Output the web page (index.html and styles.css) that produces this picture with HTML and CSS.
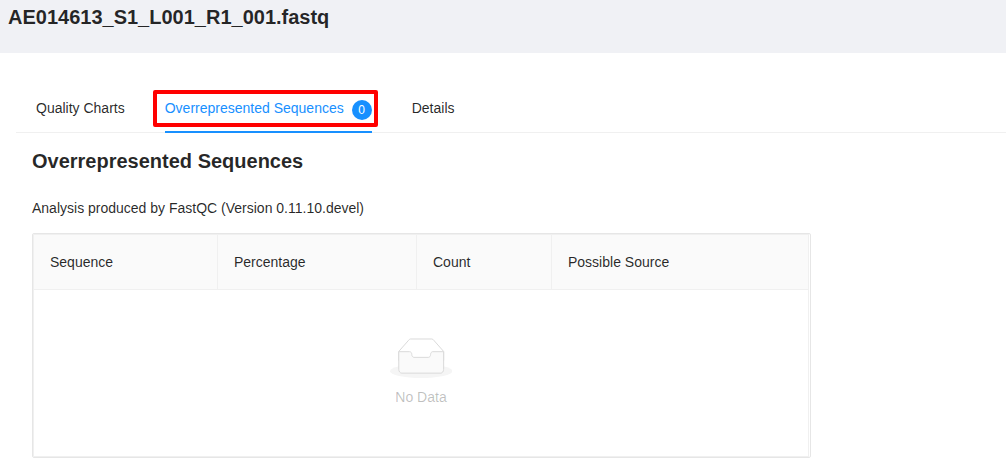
FILE: index.html
```html
<!DOCTYPE html>
<html lang="en">
<head>
<meta charset="utf-8">
<title>FastQC</title>
<link rel="stylesheet" href="styles.css">
</head>
<body>
<header class="page-header"><h1 class="file-name">AE014613_S1_L001_R1_001.fastq</h1></header>
<main class="content">
  <nav class="tabs">
    <a class="tab">Quality Charts</a>
    <a class="tab tab-active">Overrepresented Sequences<span class="badge">0</span><span class="highlight"></span></a>
    <a class="tab">Details</a>
  </nav>
  <section class="panel">
    <h2 class="title">Overrepresented Sequences</h2>
    <p class="analysis">Analysis produced by FastQC (Version 0.11.10.devel)</p>
    <div class="table">
      <div class="table-inner">
        <div class="table-head">
          <div class="cell">Sequence</div>
          <div class="cell">Percentage</div>
          <div class="cell">Count</div>
          <div class="cell">Possible Source</div>
        </div>
        <div class="empty">
          <svg class="empty-icon" width="62.4" height="40" viewBox="0 0 64 41">
            <g transform="translate(0 1)" fill="none" fill-rule="evenodd">
              <ellipse fill="#f5f5f5" cx="32" cy="33" rx="32" ry="7"/>
              <g fill-rule="nonzero" stroke="#d9d9d9">
                <path d="M55 12.76L44.854 1.258C44.367.474 43.656 0 42.907 0H21.093c-.749 0-1.46.474-1.947 1.257L9 12.761V22h46v-9.24z"/>
                <path d="M41.613 15.931c0-1.605.994-2.93 2.227-2.931H55v18.137C55 33.26 53.68 35 52.05 35h-40.1C10.32 35 9 33.259 9 31.137V13h11.16c1.233 0 2.227 1.323 2.227 2.928v.022c0 1.605 1.005 2.901 2.237 2.901h14.752c1.232 0 2.237-1.308 2.237-2.913v-.007z" fill="#fafafa"/>
              </g>
            </g>
          </svg>
          <span>No Data</span>
        </div>
      </div>
    </div>
  </section>
</main>
</body>
</html>
```
FILE: styles.css
```css
* { box-sizing: border-box; }
body { margin: 0; background: #fff; color: rgba(0,0,0,.85); font: 14px/22px "Liberation Sans", Arial, sans-serif; }
.page-header { height: 53px; padding: 3px 8px; background: #f0f1f5; }
.file-name { margin: 0; font-size: 20px; line-height: 28px; font-weight: 700; }
.content { padding: 32px 0 0 16px; }
.tabs { display: flex; gap: 40px; height: 48px; padding-left: 20px; border-bottom: 1px solid #f0f0f0; }
.tab { position: relative; height: 48px; padding-top: 12px; white-space: nowrap; }
.tab-active { display: flex; color: #1890ff; border-bottom: 2px solid #1890ff; }
.badge { width: 20px; height: 20px; margin: 3px 0 0 8px; border-radius: 10px; background: #1890ff; color: #fff; font-size: 12px; line-height: 20px; text-align: center; }
.highlight { position: absolute; left: -12px; top: 5px; width: 225px; height: 37px; border: 4px solid #f00; border-radius: 2px; }
.panel { padding: 14px 0 0 16px; }
.title { margin: 0; font-size: 20px; line-height: 28px; }
.analysis { margin: 22px 0 14px; }
.table { width: 779px; height: 225px; padding-right: 1px; border: 1px solid #e6e6e6; border-radius: 2px; }
.table-inner { height: 223px; border: 1px solid #f0f0f0; }
.table-head { display: grid; grid-template-columns: 184px 199px 135px 1fr; height: 55px; border-bottom: 1px solid #f0f0f0; background: #fafafa; }
.cell { padding: 16px; border-right: 1px solid #f0f0f0; }
.cell:last-child { border-right: 0; }
.empty { display: flex; flex-direction: column; align-items: center; padding-top: 48px; color: rgba(0,0,0,.25); }
.empty-icon { margin-bottom: 8px; }
```
